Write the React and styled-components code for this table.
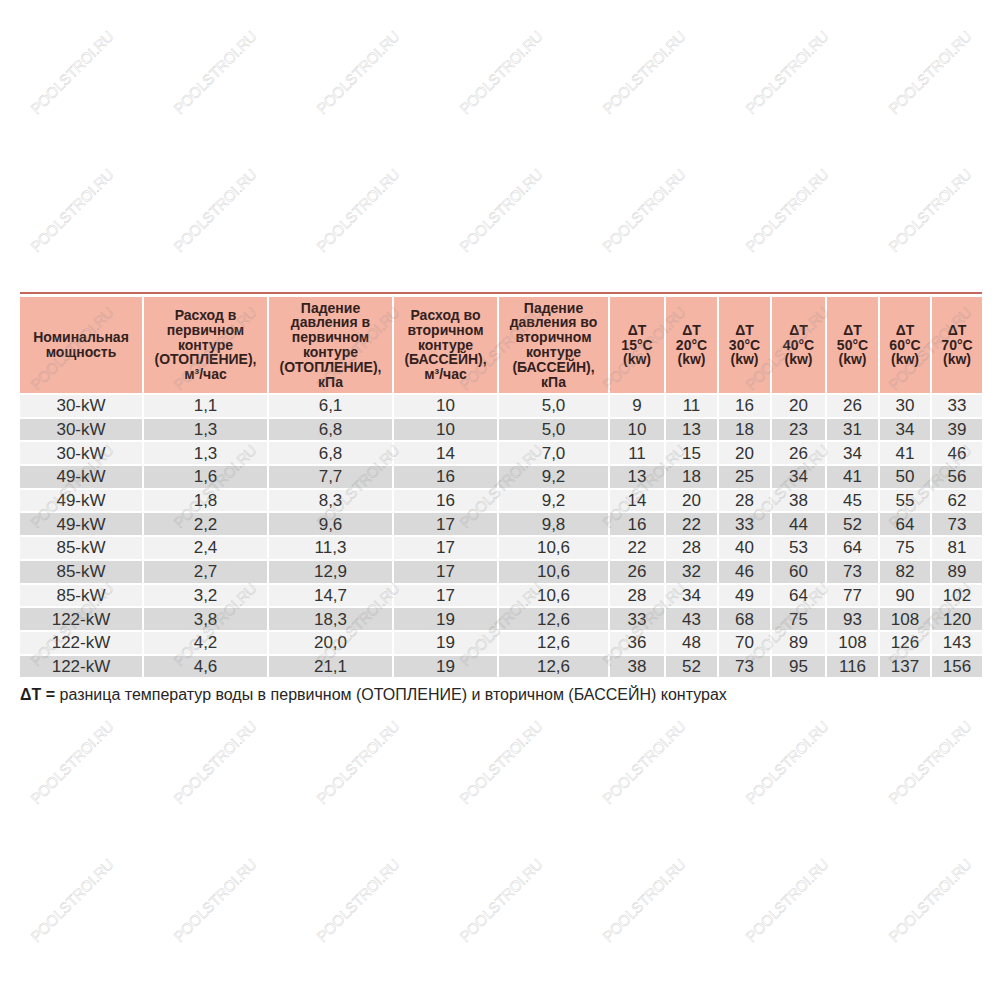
import React from 'react';
import styled, { createGlobalStyle } from 'styled-components';

const GlobalStyle = createGlobalStyle`
    html, body {
        margin: 0;
        padding: 0;
        background: #ffffff;
    }
    body {
        font-family: "Liberation Sans", Arial, sans-serif;
    }
`;

const Page = styled.div`
    position: relative;
    box-sizing: border-box;
    width: 1000px;
    height: 1000px;
    overflow: hidden;
    padding: 292px 18px 0 20px;
    background: #ffffff;
`;

const Sheet = styled.div`
    width: 962px;
`;

const TopRule = styled.div`
    height: 2px;
    background: #c4675c;
    margin-bottom: 3px;
`;

const Grid = styled.div`
    display: grid;
    grid-template-columns: 122px 123px 123px 103px 109px 54px 51px 51px 53px 51px 50px 50px;
    grid-template-rows: 96px repeat(12, 21.7px);
    column-gap: 2px;
    row-gap: 2px;
`;

const HeadCell = styled.div`
    display: flex;
    align-items: center;
    justify-content: center;
    text-align: center;
    background: #f5b5a5;
    color: #33211d;
    font-weight: bold;
    font-size: 14px;
    line-height: 14.8px;
`;

const Cell = styled.div`
    display: flex;
    align-items: center;
    justify-content: center;
    background: ${(p) => (p.$dark ? '#d9d9d9' : '#f2f2f2')};
    color: #333333;
    font-size: 17px;
    line-height: 1;
`;

const Note = styled.div`
    margin-top: 9px;
    font-size: 16px;
    line-height: 18px;
    color: #262626;
`;

const NoteKey = styled.b`
    font-weight: bold;
    color: #1e1e1e;
`;

const Watermarks = styled.div`
    position: absolute;
    inset: 0;
    display: grid;
    grid-template-columns: repeat(7, 143px);
    grid-auto-rows: 138px;
    padding-top: 3px;
    pointer-events: none;
`;

const Mark = styled.span`
    display: flex;
    align-items: center;
    justify-content: center;
    transform: rotate(-45deg);
    font-family: "Liberation Sans", Arial, sans-serif;
    font-size: 15px;
    letter-spacing: -0.3px;
    color: transparent;
    -webkit-text-stroke: 0.5px rgba(140, 140, 140, 0.4);
    white-space: nowrap;
`;

const headers = [
    ['Номинальная', 'мощность'],
    ['Расход в', 'первичном', 'контуре', '(ОТОПЛЕНИЕ),', 'м³/час'],
    ['Падение', 'давления в', 'первичном', 'контуре', '(ОТОПЛЕНИЕ),', 'кПа'],
    ['Расход во', 'вторичном', 'контуре', '(БАССЕЙН),', 'м³/час'],
    ['Падение', 'давления во', 'вторичном', 'контуре', '(БАССЕЙН),', 'кПа'],
    ...[15, 20, 30, 40, 50, 60, 70].map((t) => ['ΔT', `${t}°C`, '(kw)'])
];

const rows = [
    ['30-kW', '1,1', '6,1', '10', '5,0', 9, 11, 16, 20, 26, 30, 33],
    ['30-kW', '1,3', '6,8', '10', '5,0', 10, 13, 18, 23, 31, 34, 39],
    ['30-kW', '1,3', '6,8', '14', '7,0', 11, 15, 20, 26, 34, 41, 46],
    ['49-kW', '1,6', '7,7', '16', '9,2', 13, 18, 25, 34, 41, 50, 56],
    ['49-kW', '1,8', '8,3', '16', '9,2', 14, 20, 28, 38, 45, 55, 62],
    ['49-kW', '2,2', '9,6', '17', '9,8', 16, 22, 33, 44, 52, 64, 73],
    ['85-kW', '2,4', '11,3', '17', '10,6', 22, 28, 40, 53, 64, 75, 81],
    ['85-kW', '2,7', '12,9', '17', '10,6', 26, 32, 46, 60, 73, 82, 89],
    ['85-kW', '3,2', '14,7', '17', '10,6', 28, 34, 49, 64, 77, 90, 102],
    ['122-kW', '3,8', '18,3', '19', '12,6', 33, 43, 68, 75, 93, 108, 120],
    ['122-kW', '4,2', '20,0', '19', '12,6', 36, 48, 70, 89, 108, 126, 143],
    ['122-kW', '4,6', '21,1', '19', '12,6', 38, 52, 73, 95, 116, 137, 156]
];

function App() {
    return (
        <>
            <GlobalStyle />
            <Page>
                <Sheet>
                    <TopRule />
                    <Grid>
                        {headers.map((lines, i) => (
                            <HeadCell key={'h' + i}>
                                <span>
                                    {lines.map((line, j) => (
                                        <React.Fragment key={j}>
                                            {j > 0 && <br />}
                                            {line}
                                        </React.Fragment>
                                    ))}
                                </span>
                            </HeadCell>
                        ))}
                        {rows.map((row, r) =>
                            row.map((value, c) => (
                                <Cell key={r + '-' + c} $dark={r % 2 === 1}>
                                    {value}
                                </Cell>
                            ))
                        )}
                    </Grid>
                    <Note>
                        <NoteKey>ΔT =</NoteKey> разница температур воды в первичном (ОТОПЛЕНИЕ) и вторичном (БАССЕЙН) контурах
                    </Note>
                </Sheet>
                <Watermarks>
                    {Array.from({ length: 49 }).map((_, i) => (
                        <Mark key={i}>POOLSTROI.RU</Mark>
                    ))}
                </Watermarks>
            </Page>
        </>
    );
}

export default App;
